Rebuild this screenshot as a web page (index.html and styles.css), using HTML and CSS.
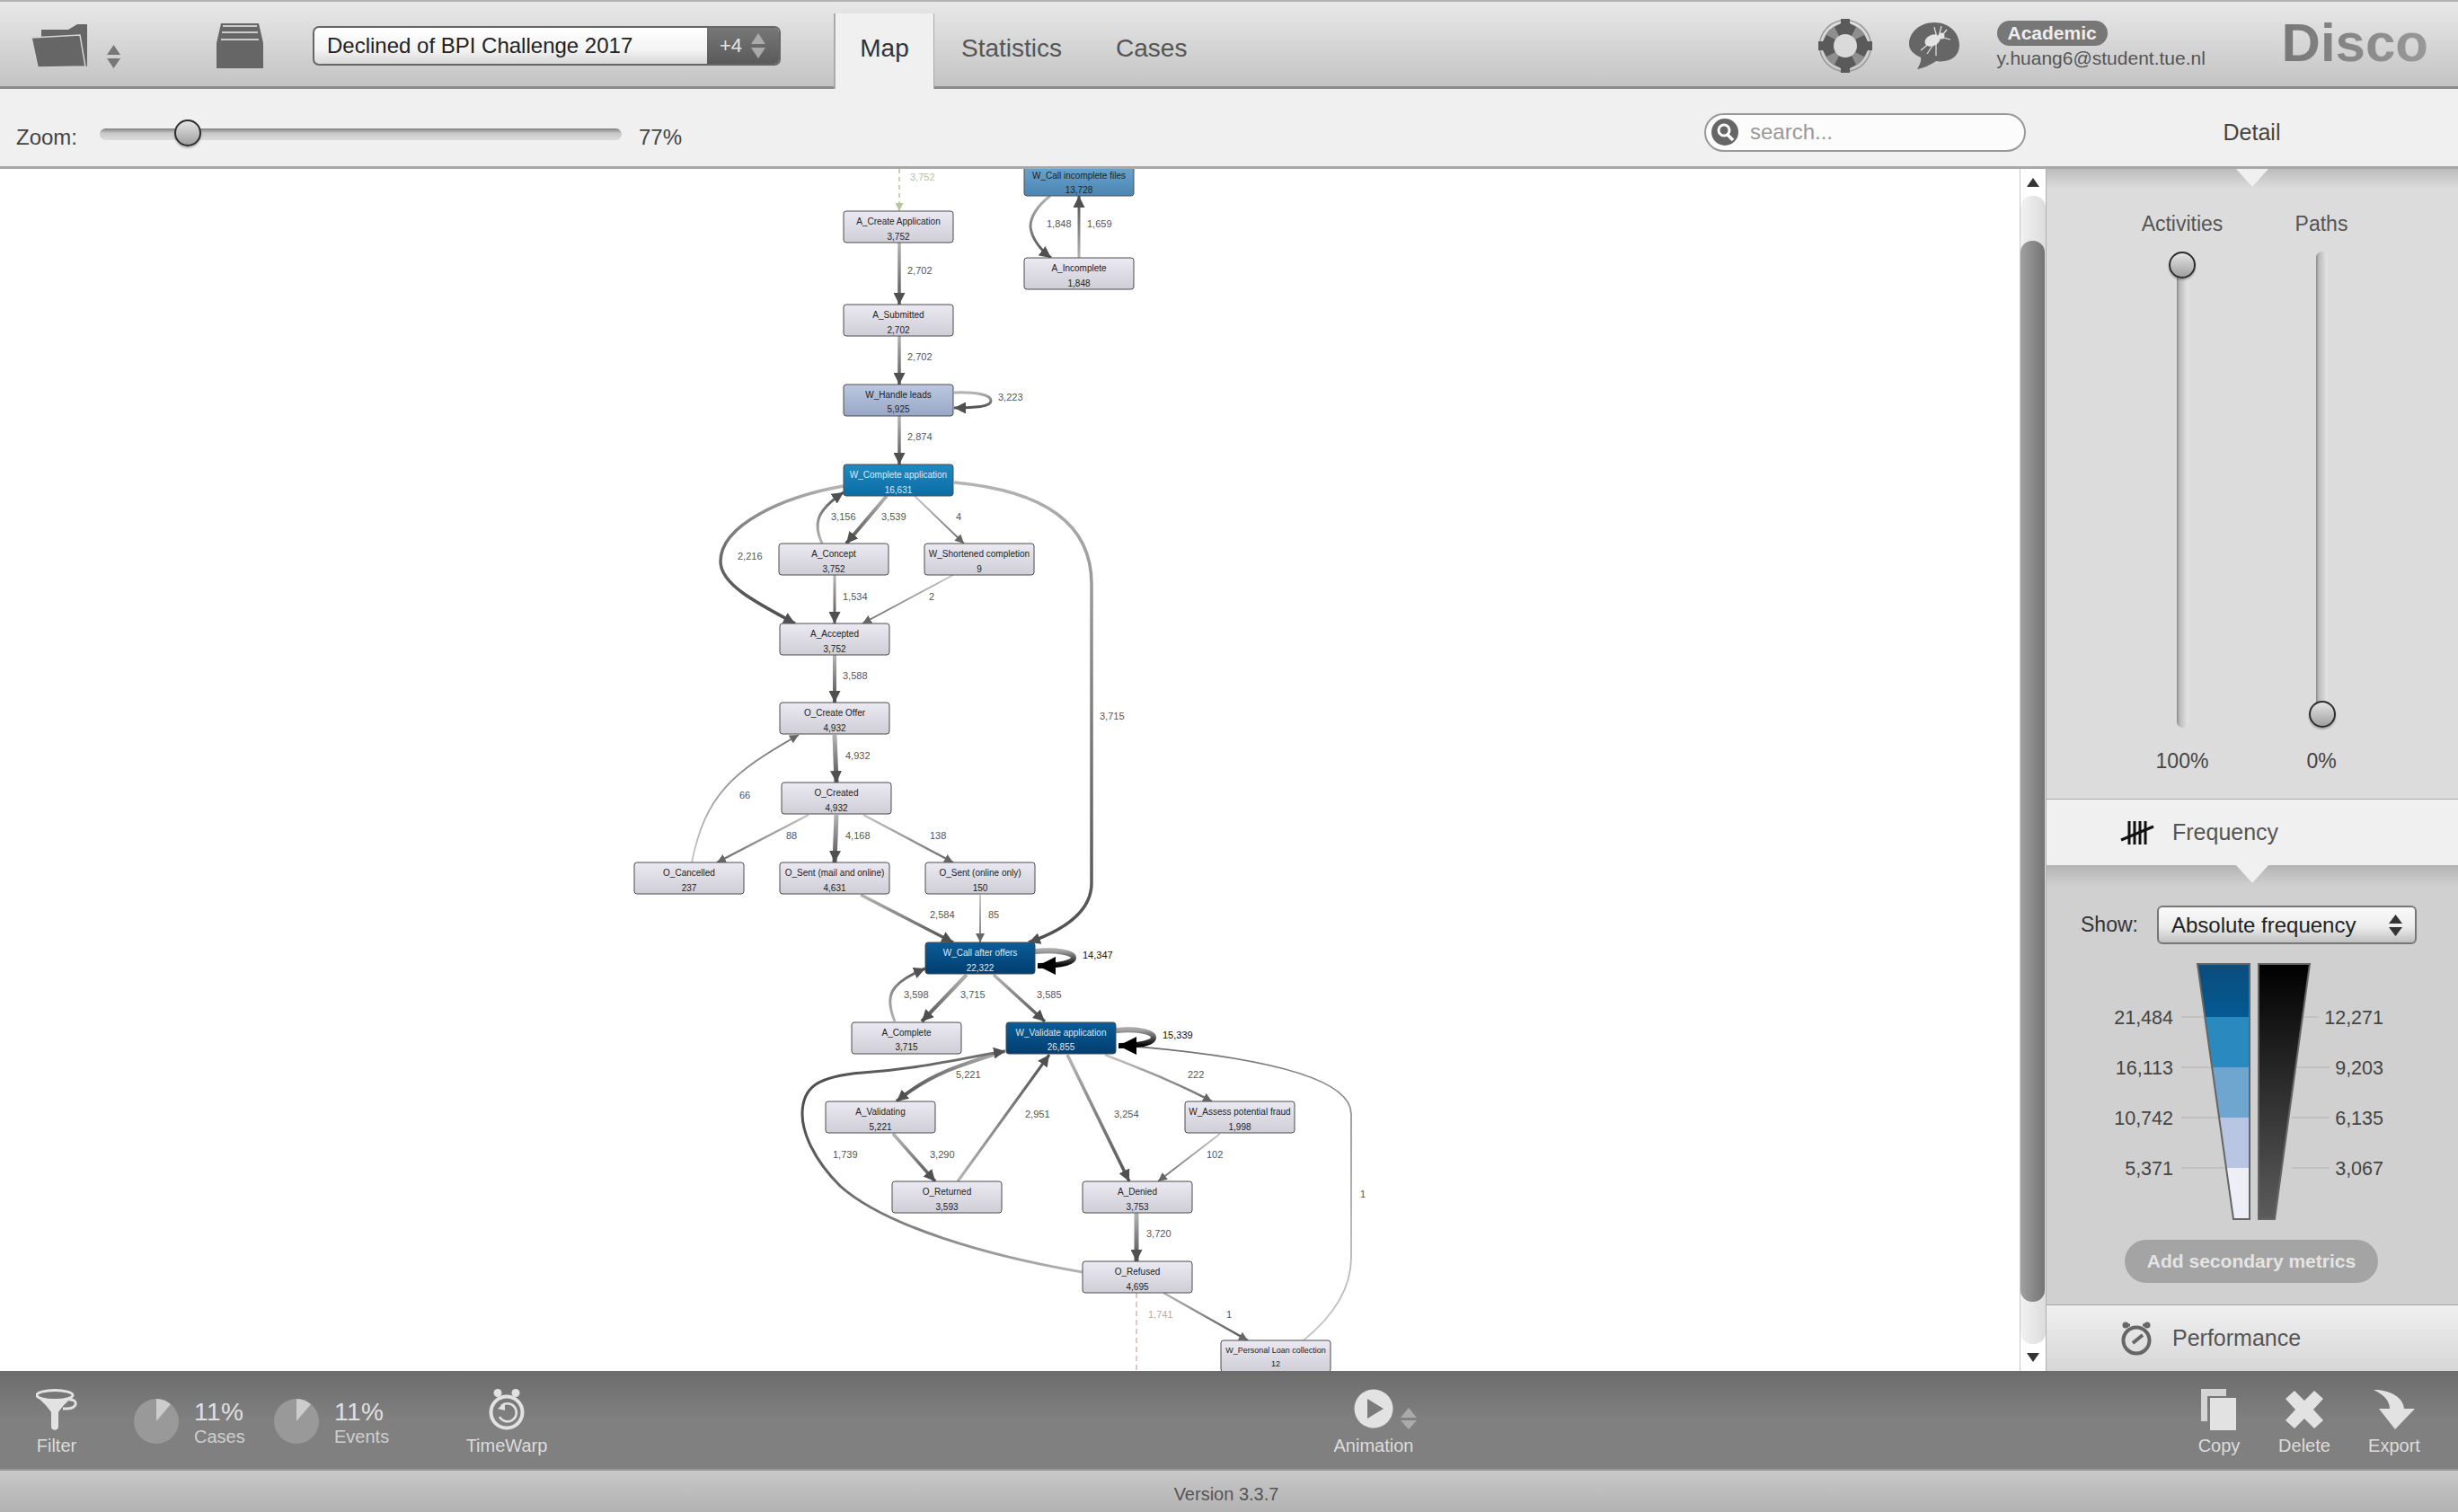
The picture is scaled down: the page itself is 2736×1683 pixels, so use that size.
FILE: index.html
```html
<!DOCTYPE html>
<html lang="en">
<head>
  <meta charset="UTF-8">
  <title>Disco</title>
  <link rel="stylesheet" href="styles.css">
</head>
<body>
  <div class="app">

    <div class="topbar">
      <svg class="ic-folder" width="62" height="48" viewBox="0 0 62 48">
        <path d="M11 6H41L51 0H62V47H11Z" fill="#666"/>
        <path d="M0 15L54 12L60 47L7 48Z" fill="#666" stroke="#d4d4d4" stroke-width="1.5"/>
      </svg>
      <svg class="ic-updown" width="17" height="26" viewBox="0 0 17 26">
        <path d="M8.5 0L16 11H1ZM8.5 26L1 15H16Z" fill="#777"/>
      </svg>
      <svg class="ic-archive" width="52" height="50" viewBox="0 0 52 50">
        <path d="M5 0H47L52 22V50H0V22Z" fill="#666"/>
        <path d="M7 3H45M6 10H46M5 18H47" stroke="#ccc" stroke-width="2" fill="none"/>
      </svg>
      <div class="log-select">
        <div class="log-name">Declined of BPI Challenge 2017</div>
        <div class="log-count">+4
          <svg width="18" height="28" viewBox="0 0 18 28"><path d="M9 0L17 12H1ZM9 28L1 16H17Z" fill="#aaa"/></svg>
        </div>
      </div>
      <div class="tabs">
        <div class="tab active">Map</div>
        <div class="tab">Statistics</div>
        <div class="tab">Cases</div>
      </div>
      <svg class="ic-buoy" width="60" height="60" viewBox="0 0 60 60">
        <circle cx="30" cy="30" r="28.500" fill="none" stroke="#999" stroke-width="1.500"/>
        <circle cx="30" cy="30" r="25" fill="#8e8e8e"/>
        <g fill="#5a5a5a">
          <path id="buoyBand" d="M25 0H35V5L42 9L37 19H23L18 9L25 5Z"/>
          <use href="#buoyBand" transform="rotate(90 30 30)"/>
          <use href="#buoyBand" transform="rotate(180 30 30)"/>
          <use href="#buoyBand" transform="rotate(270 30 30)"/>
        </g>
        <circle cx="30" cy="30" r="13" fill="#dadada"/>
      </svg>
      <svg class="ic-bug" width="56" height="52" viewBox="0 0 56 52">
        <path d="M28 0C44 0 56 11 56 25C56 39 44 45 30 43C24 47 16 51 9 52C12 47 14 42 13 39C5 35 0 31 0 24C0 11 12 0 28 0Z" fill="#666"/>
        <ellipse cx="26" cy="20" rx="9" ry="6" fill="#e4e4e4" transform="rotate(-25 26 20)"/>
        <circle cx="36" cy="15" r="3.5" fill="#e4e4e4"/>
        <path d="M28 5L31 17M36 4L33 16M13 31L24 22M20 35L28 23M30 37L30 23M42 8L37 14M46 19L38 17" stroke="#e4e4e4" stroke-width="1.2" fill="none"/>
      </svg>
      <div class="account">
        <div class="badge">Academic</div>
        <div class="email">y.huang6@student.tue.nl</div>
      </div>
      <div class="logo">Disco</div>
    </div>

    <div class="zoombar">
      <div class="zoom-label">Zoom:</div>
      <div class="zoom-track"><div class="knob knob-zoom"></div></div>
      <div class="zoom-value">77%</div>
      <div class="searchbox">
        <svg width="32" height="32" viewBox="0 0 32 32">
          <circle cx="16" cy="16" r="15" fill="#666"/>
          <circle cx="15" cy="14" r="6" fill="none" stroke="#fff" stroke-width="3"/>
          <path d="M19 19L25 25" stroke="#fff" stroke-width="3.5"/>
        </svg>
        <span>search...</span>
      </div>
      <div class="detail-title">Detail</div>
    </div>

    <div class="main">
      <div class="graph">
        <svg class="map" width="2248" height="1338" viewBox="0 188 2248 1338">
          <defs>
            <linearGradient id="nodeLight" x1="0" y1="0" x2="0" y2="1"><stop offset="0" stop-color="#ebe9f2"/><stop offset="1" stop-color="#cfced6"/></linearGradient>
            <linearGradient id="nodeLeads" x1="0" y1="0" x2="0" y2="1"><stop offset="0" stop-color="#bcc8e0"/><stop offset="1" stop-color="#98a7c6"/></linearGradient>
            <linearGradient id="nodeMid" x1="0" y1="0" x2="0" y2="1"><stop offset="0" stop-color="#6da6cf"/><stop offset="1" stop-color="#4a86b4"/></linearGradient>
            <linearGradient id="nodeBlue" x1="0" y1="0" x2="0" y2="1"><stop offset="0" stop-color="#1f8ac0"/><stop offset="1" stop-color="#0d6ca4"/></linearGradient>
            <linearGradient id="nodeDark" x1="0" y1="0" x2="0" y2="1"><stop offset="0" stop-color="#0b5c98"/><stop offset="1" stop-color="#003e70"/></linearGradient>

            <linearGradient id="edgeMid"><stop offset="0" stop-color="#b4b4b4"/><stop offset="1" stop-color="#505050"/></linearGradient>
            <linearGradient id="edgeLight"><stop offset="0" stop-color="#c4c4c4"/><stop offset="1" stop-color="#6a6a6a"/></linearGradient>
            <linearGradient id="edgeLoop"><stop offset="0" stop-color="#a8a8a8"/><stop offset="1" stop-color="#000"/></linearGradient>

            <linearGradient id="e2" href="#edgeMid" gradientUnits="userSpaceOnUse" x1="1001" y1="270" x2="1001" y2="339"/>
            <linearGradient id="e3" href="#edgeMid" gradientUnits="userSpaceOnUse" x1="1001" y1="374" x2="1001" y2="428"/>
            <linearGradient id="e4" href="#edgeMid" gradientUnits="userSpaceOnUse" x1="1062" y1="437" x2="1062" y2="454"/>
            <linearGradient id="e5" href="#edgeMid" gradientUnits="userSpaceOnUse" x1="1001" y1="463" x2="1001" y2="517"/>
            <linearGradient id="e6" href="#edgeMid" gradientUnits="userSpaceOnUse" x1="1169" y1="218" x2="1170" y2="287"/>
            <linearGradient id="e7" href="#edgeMid" gradientUnits="userSpaceOnUse" x1="1201" y1="287" x2="1201" y2="218"/>
            <linearGradient id="e8" href="#edgeMid" gradientUnits="userSpaceOnUse" x1="987" y1="552" x2="942" y2="605"/>
            <linearGradient id="e9" href="#edgeMid" gradientUnits="userSpaceOnUse" x1="915" y1="605" x2="939" y2="548"/>
            <linearGradient id="e10" href="#edgeLight" gradientUnits="userSpaceOnUse" x1="1018" y1="552" x2="1073" y2="605"/>
            <linearGradient id="e11" href="#edgeMid" gradientUnits="userSpaceOnUse" x1="1062" y1="537" x2="1145" y2="1049"/>
            <linearGradient id="e12" href="#edgeMid" gradientUnits="userSpaceOnUse" x1="939" y1="541" x2="885" y2="694"/>
            <linearGradient id="e13" href="#edgeMid" gradientUnits="userSpaceOnUse" x1="929" y1="640" x2="929" y2="694"/>
            <linearGradient id="e14" href="#edgeLight" gradientUnits="userSpaceOnUse" x1="1061" y1="640" x2="960" y2="694"/>
            <linearGradient id="e15" href="#edgeMid" gradientUnits="userSpaceOnUse" x1="929" y1="729" x2="929" y2="782"/>
            <linearGradient id="e16" href="#edgeMid" gradientUnits="userSpaceOnUse" x1="929" y1="818" x2="931" y2="871"/>
            <linearGradient id="e17" href="#edgeLight" gradientUnits="userSpaceOnUse" x1="770" y1="960" x2="889" y2="818"/>
            <linearGradient id="e18" href="#edgeLight" gradientUnits="userSpaceOnUse" x1="900" y1="907" x2="798" y2="960"/>
            <linearGradient id="e19" href="#edgeMid" gradientUnits="userSpaceOnUse" x1="931" y1="907" x2="929" y2="960"/>
            <linearGradient id="e20" href="#edgeLight" gradientUnits="userSpaceOnUse" x1="961" y1="907" x2="1061" y2="960"/>
            <linearGradient id="e21" href="#edgeMid" gradientUnits="userSpaceOnUse" x1="958" y1="996" x2="1061" y2="1049"/>
            <linearGradient id="e22" href="#edgeLight" gradientUnits="userSpaceOnUse" x1="1091" y1="996" x2="1091" y2="1049"/>
            <linearGradient id="e23" href="#edgeLoop" gradientUnits="userSpaceOnUse" x1="1152" y1="1058" x2="1152" y2="1075"/>
            <linearGradient id="e24" href="#edgeMid" gradientUnits="userSpaceOnUse" x1="1076" y1="1085" x2="1026" y2="1137"/>
            <linearGradient id="e25" href="#edgeMid" gradientUnits="userSpaceOnUse" x1="996" y1="1137" x2="1030" y2="1078"/>
            <linearGradient id="e26" href="#edgeMid" gradientUnits="userSpaceOnUse" x1="1106" y1="1085" x2="1163" y2="1137"/>
            <linearGradient id="e27" href="#edgeLoop" gradientUnits="userSpaceOnUse" x1="1242" y1="1146" x2="1242" y2="1164"/>
            <linearGradient id="e28" href="#edgeMid" gradientUnits="userSpaceOnUse" x1="1119" y1="1170" x2="998" y2="1226"/>
            <linearGradient id="e29" href="#edgeMid" gradientUnits="userSpaceOnUse" x1="994" y1="1262" x2="1041" y2="1315"/>
            <linearGradient id="e30" href="#edgeMid" gradientUnits="userSpaceOnUse" x1="1066" y1="1315" x2="1168" y2="1174"/>
            <linearGradient id="e31" href="#edgeMid" gradientUnits="userSpaceOnUse" x1="1188" y1="1174" x2="1257" y2="1315"/>
            <linearGradient id="e32" href="#edgeLight" gradientUnits="userSpaceOnUse" x1="1230" y1="1174" x2="1349" y2="1226"/>
            <linearGradient id="e33" href="#edgeLight" gradientUnits="userSpaceOnUse" x1="1358" y1="1262" x2="1289" y2="1315"/>
            <linearGradient id="e34" href="#edgeMid" gradientUnits="userSpaceOnUse" x1="1265" y1="1350" x2="1265" y2="1404"/>
            <linearGradient id="e35" href="#edgeMid" gradientUnits="userSpaceOnUse" x1="1205" y1="1416" x2="930" y2="1190"/>
            <linearGradient id="e37" href="#edgeMid" gradientUnits="userSpaceOnUse" x1="1295" y1="1439" x2="1389" y2="1492"/>
            <linearGradient id="e38" href="#edgeLight" gradientUnits="userSpaceOnUse" x1="1451" y1="1492" x2="1271" y2="1165"/>

            <marker id="arrowS" markerUnits="userSpaceOnUse" viewBox="0 0 10 10" refX="10" refY="5" markerWidth="10" markerHeight="10" orient="auto"><path d="M0 0L10 5L0 10Z" fill="#666"/></marker>
            <marker id="arrowM" markerUnits="userSpaceOnUse" viewBox="0 0 10 10" refX="10" refY="5" markerWidth="13" markerHeight="13" orient="auto"><path d="M0 0L10 5L0 10Z" fill="#505050"/></marker>
            <marker id="arrowL" markerUnits="userSpaceOnUse" viewBox="0 0 10 10" refX="10" refY="5" markerWidth="20" markerHeight="20" orient="auto"><path d="M0 0L10 5L0 10Z" fill="#000"/></marker>
            <marker id="arrowStart" markerUnits="userSpaceOnUse" viewBox="0 0 10 10" refX="10" refY="5" markerWidth="9" markerHeight="9" orient="auto"><path d="M0 0L10 5L0 10Z" fill="#b5c7a0"/></marker>
          </defs>

          <g class="edges">
            <path class="start-edge" d="M1001 188V235" marker-end="url(#arrowStart)"/>
            <path d="M1001 270V339" stroke="url(#e2)" stroke-width="3.5" marker-end="url(#arrowM)"/>
            <path d="M1001 374V428" stroke="url(#e3)" stroke-width="3.5" marker-end="url(#arrowM)"/>
            <path d="M1062 437C1085 436 1103 439 1103 446C1103 453 1085 454 1062 454" stroke="url(#e4)" stroke-width="3" marker-end="url(#arrowM)"/>
            <path d="M1001 463V517" stroke="url(#e5)" stroke-width="3.5" marker-end="url(#arrowM)"/>
            <path d="M1169 218C1153 230 1147 243 1147 252C1148 265 1158 278 1170 287" stroke="url(#e6)" stroke-width="3" marker-end="url(#arrowM)"/>
            <path d="M1201 287V218" stroke="url(#e7)" stroke-width="3" marker-end="url(#arrowM)"/>
            <path d="M987 552L942 605" stroke="url(#e8)" stroke-width="4" marker-end="url(#arrowM)"/>
            <path d="M915 605C906 585 906 570 939 548" stroke="url(#e9)" stroke-width="3" marker-end="url(#arrowM)"/>
            <path d="M1018 552L1073 605" stroke="url(#e10)" stroke-width="1.8" marker-end="url(#arrowS)"/>
            <path d="M1062 537C1150 545 1215 575 1215 650V983C1215 1015 1185 1035 1145 1049" stroke="url(#e11)" stroke-width="3.5" marker-end="url(#arrowM)"/>
            <path d="M939 541C870 553 802 585 802 625C802 650 840 670 885 694" stroke="url(#e12)" stroke-width="3.5" marker-end="url(#arrowM)"/>
            <path d="M929 640V694" stroke="url(#e13)" stroke-width="3" marker-end="url(#arrowM)"/>
            <path d="M1061 640L960 694" stroke="url(#e14)" stroke-width="1.8" marker-end="url(#arrowS)"/>
            <path d="M929 729V782" stroke="url(#e15)" stroke-width="4" marker-end="url(#arrowM)"/>
            <path d="M929 818L931 871" stroke="url(#e16)" stroke-width="5" marker-end="url(#arrowM)"/>
            <path d="M770 960C785 885 815 860 889 818" stroke="url(#e17)" stroke-width="1.8" marker-end="url(#arrowS)"/>
            <path d="M900 907L798 960" stroke="url(#e18)" stroke-width="2.5" marker-end="url(#arrowS)"/>
            <path d="M931 907L929 960" stroke="url(#e19)" stroke-width="5" marker-end="url(#arrowM)"/>
            <path d="M961 907L1061 960" stroke="url(#e20)" stroke-width="2.5" marker-end="url(#arrowS)"/>
            <path d="M958 996L1061 1049" stroke="url(#e21)" stroke-width="3.5" marker-end="url(#arrowM)"/>
            <path d="M1091 996V1049" stroke="url(#e22)" stroke-width="1.8" marker-end="url(#arrowS)"/>
            <path d="M1152 1059C1175 1057 1195 1060 1195 1066C1195 1072 1178 1075 1155 1075" stroke="url(#e23)" stroke-width="6" marker-end="url(#arrowL)"/>
            <path d="M1076 1085L1026 1137" stroke="url(#e24)" stroke-width="4" marker-end="url(#arrowM)"/>
            <path d="M996 1137C985 1110 988 1095 1030 1078" stroke="url(#e25)" stroke-width="3" marker-end="url(#arrowM)"/>
            <path d="M1106 1085L1163 1137" stroke="url(#e26)" stroke-width="3.5" marker-end="url(#arrowM)"/>
            <path d="M1451 1492C1490 1460 1504 1430 1504 1400V1240C1504 1195 1380 1175 1265 1165" stroke="url(#e38)" stroke-width="1.8"/>
            <path d="M1242 1147C1265 1145 1284 1148 1284 1155C1284 1161 1267 1164 1245 1164" stroke="url(#e27)" stroke-width="6" marker-end="url(#arrowL)"/>
            <path d="M1119 1170C1070 1185 1035 1195 998 1226" stroke="url(#e28)" stroke-width="4" marker-end="url(#arrowM)"/>
            <path d="M994 1262L1041 1315" stroke="url(#e29)" stroke-width="3.5" marker-end="url(#arrowM)"/>
            <path d="M1066 1315L1168 1174" stroke="url(#e30)" stroke-width="3" marker-end="url(#arrowM)"/>
            <path d="M1188 1174L1257 1315" stroke="url(#e31)" stroke-width="3.5" marker-end="url(#arrowM)"/>
            <path d="M1230 1174C1270 1190 1310 1205 1349 1226" stroke="url(#e32)" stroke-width="2.5" marker-end="url(#arrowS)"/>
            <path d="M1358 1262L1289 1315" stroke="url(#e33)" stroke-width="1.8" marker-end="url(#arrowS)"/>
            <path d="M1265 1350V1404" stroke="url(#e34)" stroke-width="5" marker-end="url(#arrowM)"/>
            <path d="M1205 1416C1100 1398 985 1365 935 1320C905 1290 893 1260 893 1240C893 1210 910 1198 960 1194C1020 1190 1060 1180 1119 1170" stroke="url(#e35)" stroke-width="3" marker-end="url(#arrowM)"/>
            <path class="end-edge" d="M1265 1439V1526"/>
            <path d="M1295 1439L1389 1492" stroke="url(#e37)" stroke-width="2.5" marker-end="url(#arrowS)"/>
          </g>

          <g class="labels">
            <text class="lbl-start" x="1013" y="201">3,752</text>
            <text x="1010" y="305">2,702</text>
            <text x="1010" y="401">2,702</text>
            <text x="1111" y="446">3,223</text>
            <text x="1010" y="490">2,874</text>
            <text x="1165" y="253">1,848</text>
            <text x="1210" y="253">1,659</text>
            <text x="925" y="579">3,156</text>
            <text x="981" y="579">3,539</text>
            <text x="1064" y="579">4</text>
            <text x="821" y="623">2,216</text>
            <text x="938" y="668">1,534</text>
            <text x="1034" y="668">2</text>
            <text x="938" y="756">3,588</text>
            <text x="1224" y="801">3,715</text>
            <text x="941" y="845">4,932</text>
            <text x="823" y="889">66</text>
            <text x="875" y="934">88</text>
            <text x="941" y="934">4,168</text>
            <text x="1035" y="934">138</text>
            <text x="1035" y="1022">2,584</text>
            <text x="1100" y="1022">85</text>
            <text class="lbl-strong" x="1205" y="1067">14,347</text>
            <text x="1006" y="1111">3,598</text>
            <text x="1069" y="1111">3,715</text>
            <text x="1154" y="1111">3,585</text>
            <text class="lbl-strong" x="1294" y="1156">15,339</text>
            <text x="1064" y="1200">5,221</text>
            <text x="1322" y="1200">222</text>
            <text x="1141" y="1244">2,951</text>
            <text x="1240" y="1244">3,254</text>
            <text x="927" y="1289">1,739</text>
            <text x="1035" y="1289">3,290</text>
            <text x="1343" y="1289">102</text>
            <text x="1514" y="1333">1</text>
            <text x="1276" y="1377">3,720</text>
            <text class="lbl-end" x="1278" y="1467">1,741</text>
            <text x="1365" y="1467">1</text>
          </g>

          <g class="node" fill="url(#nodeMid)" transform="translate(1140 183)"><rect/><text x="61" y="16">W_Call incomplete files</text><text x="61" y="32">13,728</text></g>
          <g class="node" fill="url(#nodeLight)" transform="translate(1140 287)"><rect/><text x="61" y="15">A_Incomplete</text><text x="61" y="32">1,848</text></g>
          <g class="node" fill="url(#nodeLight)" transform="translate(939 235)"><rect/><text x="61" y="15">A_Create Application</text><text x="61" y="32">3,752</text></g>
          <g class="node" fill="url(#nodeLight)" transform="translate(939 339)"><rect/><text x="61" y="15">A_Submitted</text><text x="61" y="32">2,702</text></g>
          <g class="node" fill="url(#nodeLeads)" transform="translate(939 428)"><rect/><text x="61" y="15">W_Handle leads</text><text x="61" y="31">5,925</text></g>
          <g class="node on-dark" fill="url(#nodeBlue)" transform="translate(939 517)"><rect/><text x="61" y="15">W_Complete application</text><text x="61" y="32">16,631</text></g>
          <g class="node" fill="url(#nodeLight)" transform="translate(867 605)"><rect/><text x="61" y="15">A_Concept</text><text x="61" y="32">3,752</text></g>
          <g class="node" fill="url(#nodeLight)" transform="translate(1029 605)"><rect/><text x="61" y="15">W_Shortened completion</text><text x="61" y="32">9</text></g>
          <g class="node" fill="url(#nodeLight)" transform="translate(868 694)"><rect/><text x="61" y="15">A_Accepted</text><text x="61" y="32">3,752</text></g>
          <g class="node" fill="url(#nodeLight)" transform="translate(868 782)"><rect/><text x="61" y="15">O_Create Offer</text><text x="61" y="32">4,932</text></g>
          <g class="node" fill="url(#nodeLight)" transform="translate(870 871)"><rect/><text x="61" y="15">O_Created</text><text x="61" y="32">4,932</text></g>
          <g class="node" fill="url(#nodeLight)" transform="translate(706 960)"><rect/><text x="61" y="15">O_Cancelled</text><text x="61" y="32">237</text></g>
          <g class="node" fill="url(#nodeLight)" transform="translate(868 960)"><rect/><text x="61" y="15">O_Sent (mail and online)</text><text x="61" y="32">4,631</text></g>
          <g class="node" fill="url(#nodeLight)" transform="translate(1030 960)"><rect/><text x="61" y="15">O_Sent (online only)</text><text x="61" y="32">150</text></g>
          <g class="node on-dark" fill="url(#nodeDark)" transform="translate(1030 1049)"><rect/><text x="61" y="15">W_Call after offers</text><text x="61" y="32">22,322</text></g>
          <g class="node" fill="url(#nodeLight)" transform="translate(948 1138)"><rect/><text x="61" y="15">A_Complete</text><text x="61" y="31">3,715</text></g>
          <g class="node on-dark" fill="url(#nodeDark)" transform="translate(1120 1138)"><rect/><text x="61" y="15">W_Validate application</text><text x="61" y="31">26,855</text></g>
          <g class="node" fill="url(#nodeLight)" transform="translate(919 1226)"><rect/><text x="61" y="15">A_Validating</text><text x="61" y="32">5,221</text></g>
          <g class="node" fill="url(#nodeLight)" transform="translate(1319 1226)"><rect/><text x="61" y="15">W_Assess potential fraud</text><text x="61" y="32">1,998</text></g>
          <g class="node" fill="url(#nodeLight)" transform="translate(993 1315)"><rect/><text x="61" y="15">O_Returned</text><text x="61" y="32">3,593</text></g>
          <g class="node" fill="url(#nodeLight)" transform="translate(1205 1315)"><rect/><text x="61" y="15">A_Denied</text><text x="61" y="32">3,753</text></g>
          <g class="node" fill="url(#nodeLight)" transform="translate(1205 1404)"><rect/><text x="61" y="15">O_Refused</text><text x="61" y="32">4,695</text></g>
          <g class="node node-small" fill="url(#nodeLight)" transform="translate(1359 1492)"><rect/><text x="61" y="14">W_Personal Loan collection</text><text x="61" y="29">12</text></g>
        </svg>
      </div>

      <div class="scrollbar">
        <div class="scroll-up"></div>
        <div class="scroll-cap"><div class="scroll-thumb"></div></div>
        <div class="scroll-down"></div>
      </div>

      <div class="detail">
        <div class="pointer pointer-top"></div>
        <div class="filters">
          <div class="filter-col">
            <div class="filter-name">Activities</div>
            <div class="v-track"><div class="knob knob-top"></div></div>
            <div class="filter-value">100%</div>
          </div>
          <div class="filter-col">
            <div class="filter-name">Paths</div>
            <div class="v-track"><div class="knob knob-bottom"></div></div>
            <div class="filter-value">0%</div>
          </div>
        </div>

        <div class="section-head">
          <svg width="38" height="28" viewBox="0 0 38 28">
            <path d="M10 1V27M16 1V27M22 1V27M28 1V27" stroke="#111" stroke-width="3" fill="none"/>
            <path d="M1 22L37 7" stroke="#111" stroke-width="3" fill="none"/>
          </svg>
          <span>Frequency</span>
        </div>
        <div class="metric">
          <div class="pointer"></div>
          <div class="show-row">
            <div class="show-label">Show:</div>
            <div class="show-select">
              <span>Absolute frequency</span>
              <svg width="17" height="24" viewBox="0 0 17 24"><path d="M8.5 0L16 10H1ZM8.5 24L1 14H16Z" fill="#333"/></svg>
            </div>
          </div>
          <svg class="funnel" width="459" height="310" viewBox="2277 1060 459 310">
            <defs>
              <linearGradient id="darkFill" x1="0" y1="0" x2="0" y2="1"><stop offset="0" stop-color="#000"/><stop offset="1" stop-color="#5c5c5c"/></linearGradient>
              <linearGradient id="topBand" x1="0" y1="0" x2="0" y2="1"><stop offset="0" stop-color="#0b4c7c"/><stop offset="1" stop-color="#035a92"/></linearGradient>
              <clipPath id="funnelClip"><path d="M2445 1073H2503V1357H2485Z"/></clipPath>
            </defs>
            <path class="tick" d="M2427 1132H2460M2427 1188H2475M2427 1244H2487M2427 1300H2500M2550 1132H2580M2550 1188H2592M2550 1244H2592M2550 1300H2592"/>
            <g clip-path="url(#funnelClip)">
              <rect x="2440" y="1073" width="70" height="59" fill="url(#topBand)"/>
              <rect x="2440" y="1132" width="70" height="56" fill="#2a8abf"/>
              <rect x="2440" y="1188" width="70" height="56" fill="#6fa6d0"/>
              <rect x="2440" y="1244" width="70" height="56" fill="#b8c6e3"/>
              <rect x="2440" y="1300" width="70" height="57" fill="#eeeef6"/>
            </g>
            <path d="M2445 1073H2503V1357H2485Z" fill="none" stroke="#666" stroke-width="2"/>
            <path d="M2513 1073H2570L2531 1357H2513Z" fill="url(#darkFill)" stroke="#666" stroke-width="2"/>
            <g class="funnel-nums">
              <text x="2418" y="1140">21,484</text>
              <text x="2418" y="1196">16,113</text>
              <text x="2418" y="1252">10,742</text>
              <text x="2418" y="1308">5,371</text>
              <text x="2652" y="1140">12,271</text>
              <text x="2652" y="1196">9,203</text>
              <text x="2652" y="1252">6,135</text>
              <text x="2652" y="1308">3,067</text>
            </g>
          </svg>
          <div class="secondary-btn">Add secondary metrics</div>
        </div>
        <div class="section-head section-off">
          <svg width="36" height="38" viewBox="0 0 36 38">
            <circle cx="18" cy="21" r="14.5" fill="none" stroke="#666" stroke-width="4"/>
            <circle cx="6" cy="4" r="3.5" fill="#666"/>
            <circle cx="30" cy="4" r="3.5" fill="#666"/>
            <path d="M7 4H11M25 4H29" stroke="#666" stroke-width="3"/>
            <path d="M14 24L25 15" stroke="#666" stroke-width="4"/>
          </svg>
          <span>Performance</span>
        </div>
      </div>
    </div>

    <div class="toolbar">
      <div class="tool tool-filter">
        <svg width="46" height="46" viewBox="0 0 46 46">
          <ellipse cx="21" cy="7" rx="20" ry="5.5" fill="none" stroke="#e2e2e2" stroke-width="3"/>
          <path d="M1 8C6 14 12 18 17 26V42C17 47 25 47 25 42V26C30 18 36 14 41 8C34 13 8 13 1 8Z" fill="#e2e2e2"/>
          <path d="M37 12C47 11 47 22 35 22H30" fill="none" stroke="#e2e2e2" stroke-width="3"/>
        </svg>
        <div class="tool-label">Filter</div>
      </div>
      <div class="stat">
        <svg width="50" height="50" viewBox="0 0 50 50">
          <circle cx="25" cy="25" r="25" fill="#999"/>
          <path d="M25 25V0A25 25 0 0 1 41 6Z" fill="#ccc"/>
        </svg>
        <div class="stat-text">
          <div class="stat-num">11%</div>
          <div class="stat-name">Cases</div>
        </div>
      </div>
      <div class="stat">
        <svg width="50" height="50" viewBox="0 0 50 50">
          <circle cx="25" cy="25" r="25" fill="#999"/>
          <path d="M25 25V0A25 25 0 0 1 41 6Z" fill="#ccc"/>
        </svg>
        <div class="stat-text">
          <div class="stat-num">11%</div>
          <div class="stat-name">Events</div>
        </div>
      </div>
      <div class="tool tool-warp">
        <svg width="42" height="46" viewBox="0 0 42 46">
          <circle cx="21" cy="26" r="17.5" fill="none" stroke="#e2e2e2" stroke-width="4"/>
          <circle cx="11" cy="4.500" r="4.500" fill="#e2e2e2"/>
          <circle cx="31" cy="4.500" r="4.500" fill="#e2e2e2"/>
          <path d="M15 19A10 10 0 1 1 13 31" fill="none" stroke="#e2e2e2" stroke-width="2.500"/>
          <path d="M11 22L19 15V24Z" fill="#e2e2e2"/>
        </svg>
        <div class="tool-label">TimeWarp</div>
      </div>
      <div class="tool tool-anim">
        <svg width="74" height="46" viewBox="0 0 74 46">
          <circle cx="24" cy="22" r="21.500" fill="#e2e2e2"/>
          <path d="M17 11L35 22L17 33Z" fill="#7a7a7a"/>
          <path d="M63 21L72 32H54ZM63 45L54 35H72Z" fill="#aaa"/>
        </svg>
        <div class="tool-label">Animation</div>
      </div>
      <div class="tool tool-copy">
        <svg width="40" height="46" viewBox="0 0 40 46">
          <path d="M0 0H28V8H7V36H0Z" fill="#d4d4d4"/>
          <rect x="10" y="10" width="29" height="36" fill="#e2e2e2"/>
        </svg>
        <div class="tool-label">Copy</div>
      </div>
      <div class="tool tool-delete">
        <svg width="42" height="42" viewBox="0 0 42 42">
          <path d="M10 0L21 11L32 0L42 9L31 21L42 33L32 42L21 31L10 42L0 33L11 21L0 9Z" fill="#e2e2e2"/>
        </svg>
        <div class="tool-label">Delete</div>
      </div>
      <div class="tool tool-export">
        <svg width="46" height="44" viewBox="0 0 46 44">
          <path d="M0 0C18 0 33 8 34 21H46L24 44L6 21H18C18 12 11 5 0 0Z" fill="#e2e2e2"/>
        </svg>
        <div class="tool-label">Export</div>
      </div>
    </div>

    <div class="version">Version 3.3.7</div>
  </div>
</body>
</html>
```

FILE: styles.css
```css
* {
  box-sizing: border-box;
}

html, body {
  margin: 0;
  padding: 0;
  background: #fff;
  font-family: 'Liberation Sans', Arial, sans-serif;
  color: #333;
}

.app {
  width: 2736px;
  height: 1683px;
  display: flex;
  flex-direction: column;
  overflow: hidden;
}

/* top bar */
.topbar {
  height: 99px;
  flex: none;
  display: flex;
  align-items: center;
  padding: 3px 0 0 35px;
  background: linear-gradient(to bottom, #e8e8e8, #c4c4c4);
  border-top: 2px solid #b4b4b4;
  border-bottom: 3px solid #8c8c8c;
}

.ic-updown {
  margin: 24px 0 0 21px;
}

.ic-archive {
  margin-left: 106px;
}

.log-select {
  width: 521px;
  height: 44px;
  margin-left: 55px;
  display: flex;
  border: 2px solid #666;
  border-radius: 7px;
  overflow: hidden;
  background: linear-gradient(to bottom, #fff, #f4f4f4 60%, #d8d8d8);
}

.log-name {
  flex: 1;
  padding-left: 14px;
  font-size: 24px;
  line-height: 40px;
  color: #222;
}

.log-count {
  width: 80px;
  display: flex;
  align-items: center;
  justify-content: center;
  gap: 9px;
  font-size: 22px;
  color: #e4e4e4;
  background: linear-gradient(to bottom, #777, #5a5a5a);
}

.tabs {
  display: flex;
  align-self: flex-end;
  height: 97px;
  margin: 0 0 -3px 59px;
  padding-top: 13px;
}

.tab {
  padding: 0 30px;
  font-size: 28px;
  line-height: 78px;
  color: #555;
}

.tab.active {
  width: 112px;
  padding: 0;
  text-align: center;
  color: #333;
  background: #f0f0f0;
  border-left: 2px solid #aaa;
  border-right: 1px solid #aaa;
}

.ic-buoy {
  margin-left: auto;
}

.ic-bug {
  margin-left: 41px;
}

.account {
  width: 232px;
  margin-left: 42px;
}

.badge {
  width: 123px;
  height: 28px;
  border-radius: 14px;
  background: #777;
  color: #eee;
  font-size: 21px;
  font-weight: bold;
  line-height: 28px;
  text-align: center;
}

.email {
  font-size: 21px;
  line-height: 28px;
  color: #555;
}

.logo {
  margin: -6px 33px 0 85px;
  font-size: 60px;
  font-weight: bold;
  line-height: 60px;
  background: linear-gradient(to right, #777, #999);
  -webkit-background-clip: text;
  background-clip: text;
  color: transparent;
}

/* zoom row */
.zoombar {
  height: 89px;
  flex: none;
  display: flex;
  align-items: center;
  padding: 10px 0 0 18px;
  background: #f0f0f0;
  border-bottom: 3px solid #a8a8a8;
}

.zoom-label {
  width: 93px;
  margin-top: 11px;
  font-size: 24px;
  color: #444;
}

.zoom-track {
  position: relative;
  width: 581px;
  height: 13px;
  margin-top: 5px;
  border-radius: 7px;
  background: linear-gradient(to bottom, #808080, #c8c8c8 40%, #dcdcdc);
}

.zoom-value {
  margin: 11px 0 0 19px;
  font-size: 24px;
  color: #444;
}

.searchbox {
  width: 358px;
  height: 43px;
  margin-left: auto;
  display: flex;
  align-items: center;
  gap: 12px;
  padding-left: 5px;
  border: 2px solid #999;
  border-radius: 22px;
  background: #fcfcfc;
  font-size: 24px;
  color: #999;
}

.detail-title {
  width: 459px;
  margin-left: 22px;
  text-align: center;
  font-size: 25px;
  color: #444;
}

.knob {
  position: absolute;
  width: 30px;
  height: 30px;
  border: 2px solid #2c2c2c;
  border-radius: 50%;
  background: linear-gradient(to bottom, #e4e4e4, #a0a0a0);
  box-shadow: 0 2px 2px rgba(0, 0, 0, 0.25);
}

.knob-zoom {
  left: 83px;
  top: -10px;
}

.knob-top {
  left: -9px;
  top: 0;
}

.knob-bottom {
  left: -8px;
  bottom: 0;
}

/* main area */
.main {
  flex: 1;
  display: flex;
  min-height: 0;
}

.graph {
  width: 2248px;
  flex: none;
  background: #fff;
  overflow: hidden;
}

.map {
  display: block;
}

.edges path {
  fill: none;
}

.start-edge {
  stroke: #b5c7a0;
  stroke-width: 1.5;
  stroke-dasharray: 5 4;
}

.end-edge {
  stroke: #d8b4b4;
  stroke-width: 1.5;
  stroke-dasharray: 6 4;
}

.labels text {
  font-size: 11px;
  fill: #555;
}

.labels .lbl-start {
  fill: #b8c0a8;
}

.labels .lbl-end {
  fill: #c4a4a4;
}

.labels .lbl-strong {
  fill: #111;
}

.node rect {
  width: 122px;
  height: 35px;
  rx: 3px;
  ry: 3px;
  stroke: #4c4c4c;
  stroke-width: 1;
}

.node text {
  font-size: 10px;
  text-anchor: middle;
  fill: #222;
}

.node.node-small text {
  font-size: 9px;
}

.node.on-dark text {
  fill: #dbeaf6;
}

/* scrollbar */
.scrollbar {
  width: 29px;
  flex: none;
  display: flex;
  flex-direction: column;
  background: #fff;
  border-left: 1px solid #c8c8c8;
}

.scroll-up, .scroll-down {
  height: 30px;
  flex: none;
  display: flex;
  align-items: center;
  justify-content: center;
}

.scroll-up::before, .scroll-down::before {
  content: "";
  border-left: 7px solid transparent;
  border-right: 7px solid transparent;
}

.scroll-up::before {
  border-bottom: 10px solid #333;
}

.scroll-down::before {
  border-top: 10px solid #333;
}

.scroll-cap {
  flex: 1;
  display: flex;
  padding: 50px 1px 47px 0;
  border-radius: 13px;
  background: linear-gradient(to right, #f2f2f2, #dcdcdc);
}

.scroll-thumb {
  flex: 1;
  border-radius: 13px;
  background: linear-gradient(to right, #a0a0a0, #747474);
}

/* right panel */
.detail {
  position: relative;
  width: 459px;
  flex: none;
  display: flex;
  flex-direction: column;
  background: #dcdcdc;
  border-left: 1px solid #b0b0b0;
}

.pointer {
  position: absolute;
  top: 0;
  left: 211px;
  border-left: 18px solid transparent;
  border-right: 18px solid transparent;
  border-top: 20px solid #f0f0f0;
}

.filters {
  height: 701px;
  flex: none;
  display: flex;
  gap: 35px;
  padding: 48px 0 0 91px;
  background: linear-gradient(to bottom, #bcbcbc, #dcdcdc 22px);
}

.filter-col {
  width: 120px;
  display: flex;
  flex-direction: column;
  align-items: center;
}

.filter-name {
  font-size: 23px;
  line-height: 26px;
  color: #555;
}

.v-track {
  position: relative;
  width: 13px;
  height: 530px;
  margin-top: 18px;
  border-radius: 7px;
  background: linear-gradient(to right, #888, #bbb 3px, #d0d0d0 60%, #e6e6e6);
}

.filter-value {
  margin-top: 24px;
  font-size: 23px;
  line-height: 26px;
  color: #444;
}

.section-head {
  height: 74px;
  flex: none;
  display: flex;
  align-items: center;
  gap: 20px;
  padding-left: 82px;
  background: #f0f0f0;
  border-top: 1px solid #aaa;
  font-size: 25px;
  color: #555;
}

.section-off {
  gap: 22px;
  background: linear-gradient(to bottom, #f0f0f0, #d6d6d6);
  border-top-color: #a4a4a4;
}

.metric {
  position: relative;
  height: 489px;
  flex: none;
  padding-top: 45px;
  background: linear-gradient(to bottom, #b4b4b4, #d0d0d0 24px);
}

.show-row {
  display: flex;
  align-items: center;
  padding-left: 38px;
}

.show-label {
  width: 85px;
  font-size: 23px;
  color: #333;
}

.show-select {
  width: 289px;
  height: 43px;
  display: flex;
  align-items: center;
  justify-content: space-between;
  padding: 0 13px 0 14px;
  border: 2px solid #777;
  border-radius: 6px;
  background: linear-gradient(to bottom, #fafafa, #ececec 55%, #c0c0c0);
  font-size: 24px;
  color: #222;
}

.funnel {
  display: block;
  margin-top: 9px;
}

.tick {
  fill: none;
  stroke: #bcbcbc;
  stroke-width: 1.5;
}

.funnel-nums text {
  font-size: 21.5px;
  text-anchor: end;
  fill: #444;
}

.secondary-btn {
  width: 282px;
  height: 48px;
  margin: 10px 0 0 87px;
  border-radius: 24px;
  background: #a4a4a4;
  color: #e4e4e4;
  font-size: 21px;
  font-weight: bold;
  line-height: 48px;
  text-align: center;
}

/* bottom toolbar */
.toolbar {
  height: 111px;
  flex: none;
  display: flex;
  padding-left: 18px;
  background: linear-gradient(to bottom, #6c6c6c, #808080 50%);
  border-bottom: 2px solid #999;
}

.tool {
  width: 90px;
  flex: none;
  display: flex;
  flex-direction: column;
  align-items: center;
  padding-top: 20px;
}

.tool svg {
  height: 46px;
  flex: none;
}

.tool-label {
  margin-top: 5px;
  font-size: 20px;
  line-height: 24px;
  color: #dcdcdc;
}

.tool-anim {
  margin-left: 875px;
}

.tool-anim svg {
  margin-left: 26px;
}

.tool-copy {
  margin-left: auto;
}

.tool-delete {
  margin-left: 5px;
}

.tool-export {
  margin: 0 26px 0 10px;
}

.stat {
  width: 156px;
  flex: none;
  display: flex;
  gap: 17px;
  padding-top: 31px;
}

.tool-filter + .stat {
  margin-left: 41px;
}

.tool-warp {
  margin-left: 58px;
}

.stat-num {
  font-size: 28px;
  letter-spacing: 0.5px;
  line-height: 30px;
  color: #e0e0e0;
}

.stat-name {
  font-size: 20px;
  line-height: 24px;
  color: #cfcfcf;
}

.version {
  height: 46px;
  flex: none;
  padding-right: 6px;
  background: linear-gradient(to bottom, #c8c8c8, #b2b2b2);
  text-align: center;
  font-size: 20px;
  line-height: 52px;
  color: #555;
}
```
